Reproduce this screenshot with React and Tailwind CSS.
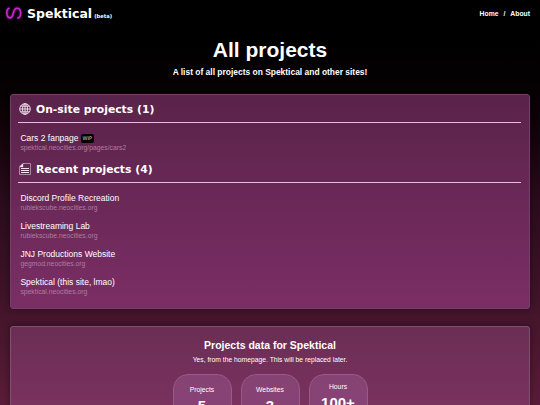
import React from 'react';

const onSite = [
  { name: 'Cars 2 fanpage', url: 'spektical.neocities.org/pages/cars2', wip: true },
];

const recent = [
  { name: 'Discord Profile Recreation', url: 'rubiekscube.neocities.org' },
  { name: 'Livestreaming Lab', url: 'rubiekscube.neocities.org' },
  { name: 'JNJ Productions Website', url: 'gegmod.neocities.org' },
  { name: 'Spektical (this site, lmao)', url: 'spektical.neocities.org' },
];

const stats = [
  { label: 'Projects', value: '5' },
  { label: 'Websites', value: '3' },
  { label: 'Hours', value: '100+', raised: true },
];

const Logo = () => (
  <svg viewBox="0 0 16 12" className="w-4 h-3 mb-[2px] overflow-visible drop-shadow-[0_0_1px_#a818ac]" fill="none" stroke="#c926ce" strokeWidth="1.6" strokeLinecap="round">
    <path d="M3 1.3C1.2 1.8.8 3.6.9 6C1 9 2 10.9 4 10.9C6.2 10.9 6.8 8.5 7.4 6C8 3.4 8.8 1.2 11 1.2C13.6 1.2 14.7 3.4 14.7 6C14.7 8.8 13.9 10.6 11.8 11" />
  </svg>
);

const GlobeIcon = () => (
  <svg viewBox="0 0 12 12" className="w-3 h-3" fill="none" stroke="#f3e6f0" strokeWidth="0.9">
    <circle cx="6" cy="6" r="5.3" />
    <ellipse cx="6" cy="6" rx="2.5" ry="5.3" />
    <path d="M6 .7V11.3M.7 6H11.3M1.5 3.2H10.5M1.5 8.8H10.5" />
  </svg>
);

const PageIcon = () => (
  <svg viewBox="0 0 12 12" className="w-3 h-3" fill="none" stroke="#f3e6f0">
    <path d="M4 .5H11.5V11.5H.5V4Z" strokeWidth="0.5" />
    <path d="M.5 4L4 .5V4Z" fill="#f3e6f0" strokeWidth="0.3" />
    <path d="M2 5.5H10M2 7.5H10M2 9.5H10" strokeWidth="1" />
  </svg>
);

const SectionTitle = ({ icon, children }) => (
  <div className="flex items-center h-[28px] border-b border-[#e6bfe0]">
    <span className="w-[18px] pl-px shrink-0">{icon}</span>
    <h2 className="pt-[3px] font-['DejaVu_Sans',sans-serif] font-bold text-[10.8px] leading-none">{children}</h2>
  </div>
);

const Project = ({ item }) => (
  <li className="h-[28px] pl-[2.4px]">
    <div className="flex items-center h-[13px] pt-px text-[8.5px] leading-none">
      {item.name}
      {item.wip && (
        <span className="ml-[2px] h-[9px] px-[2px] flex items-center rounded-[2px] bg-black text-[#ddd] text-[5px] font-['DejaVu_Sans',sans-serif]">WIP</span>
      )}
    </div>
    <p className="text-[6.8px] leading-[8px] text-[#aa7ea4]">{item.url}</p>
  </li>
);

const Navbar = () => (
  <nav className="flex items-center justify-between h-[27px] pt-px pl-[6px] pr-[10px]">
    <div className="flex items-center">
      <Logo />
      <span className="ml-[5px] font-['DejaVu_Sans',sans-serif] font-bold text-[12.5px] leading-none">Spektical</span>
      <span className="ml-[2px] mt-[5px] font-['DejaVu_Sans',sans-serif] font-bold text-[5.2px] leading-none">(beta)</span>
    </div>
    <div className="flex gap-[5px] pt-px text-[6.8px] font-bold leading-none">
      <a>Home</a>
      <span>/</span>
      <a>About</a>
    </div>
  </nav>
);

const App = () => {
  return (
    <div className="h-[405px] overflow-hidden bg-linear-to-b from-black via-[#2a0c1b] to-[#5a1c38] text-white font-['Liberation_Sans',Arial,sans-serif]">
      <Navbar />
      <header className="h-[67px] pt-[11px] text-center">
        <h1 className="text-[21px] leading-[23px] font-bold">All projects</h1>
        <p className="mt-[6px] text-[8.45px] leading-[10px] font-bold">A list of all projects on Spektical and other sites!</p>
      </header>

      <main className="mx-[10px]">
        <section className="h-[215px] pl-[7px] pr-2 rounded-[3px] border border-[#743f6a] bg-linear-to-b from-[#5a234a] to-[#7b2e65] shadow-[0_0_6px_#00000066]">
          <SectionTitle icon={<GlobeIcon />}>On-site projects (1)</SectionTitle>
          <ul className="pt-[8px] h-[32px]">
            {onSite.map((item) => (
              <Project key={item.name} item={item} />
            ))}
          </ul>
          <SectionTitle icon={<PageIcon />}>Recent projects (4)</SectionTitle>
          <ul className="pt-[8px]">
            {recent.map((item) => (
              <Project key={item.name} item={item} />
            ))}
          </ul>
        </section>

        <section className="mt-[17px] h-[150px] pt-[12px] text-center rounded-[3px] border border-[#80516f] bg-linear-to-b from-[#6b2e55] to-[#873467] shadow-[0_0_6px_#00000066]">
          <h3 className="text-[10.5px] leading-[13px] font-bold">Projects data for Spektical</h3>
          <p className="mt-[4px] text-[6.75px] leading-[8px]">Yes, from the homepage. This will be replaced later.</p>
          <div className="mt-[10px] flex justify-center gap-[9px]">
            {stats.map((stat) => (
              <div
                key={stat.label}
                className={`w-[59px] h-[70px] rounded-[15px] border border-[#985a88] bg-linear-to-b from-[#854373] to-[#8b4278] ${stat.raised ? 'pt-[8px]' : 'pt-[11px]'}`}
              >
                <p className="text-[6.8px] leading-[8px]">{stat.label}</p>
                <p className="mt-[3px] text-[15px] leading-[17px] font-bold">{stat.value}</p>
              </div>
            ))}
          </div>
        </section>
      </main>
    </div>
  );
};

export default App;
